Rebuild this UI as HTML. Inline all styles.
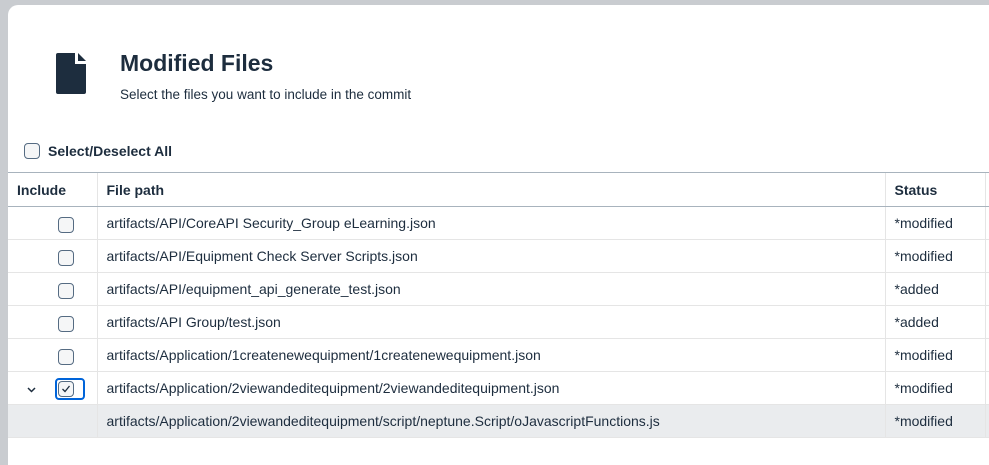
<!DOCTYPE html>
<html><head><style>
body{margin:0;width:989px;height:442px;overflow:hidden;background:#c9ccd0;font-family:"Liberation Sans",Arial,sans-serif;color:#1d2d3e;position:relative}
.dlg{position:absolute;left:8px;top:5px;width:1000px;height:460px;background:#fff;border-radius:10px 0 0 0}
.icon{position:absolute;left:47px;top:48px}
h1{position:absolute;left:112px;top:45px;margin:0;font-size:23px;font-weight:bold;color:#1d2d3e}
.sub{position:absolute;left:112px;top:82px;font-size:13.5px;color:#1d2d3e}
.cb{position:absolute;width:14px;height:14px;border:1px solid #556b82;border-radius:4px;background:#f5f6f7;box-sizing:content-box}
.sel{position:absolute;left:40px;top:138px;font-size:14px;font-weight:bold}
table{position:absolute;left:0;top:167px;border-collapse:collapse;font-size:14px;table-layout:fixed;width:1020px}
td,th{height:32px;border-bottom:1px solid #e5e5e5;padding:0 9px;text-align:left;white-space:nowrap}
th{height:33px;font-size:14px;font-weight:bold;border-top:1px solid #a8b3bd;border-bottom:1px solid #a8b3bd}
td+td,th+th{border-left:1px solid #e5e5e5}
tr.hl td{background:#eaecee}
</style></head><body>
<div class="dlg">
<svg class="icon" width="32" height="42" viewBox="0 0 32 42"><path d="M3 0H20V11H31V39Q31 41 29 41H3Q1 41 1 39V2Q1 0 3 0Z" fill="#1d2d3e"/><path d="M23 0L31 8H23Z" fill="#1d2d3e"/></svg>
<h1>Modified Files</h1>
<div class="sub">Select the files you want to include in the commit</div>
<div class="cb" style="left:16px;top:138px"></div>
<div class="sel">Select/Deselect All</div>
<table>
<col style="width:89px"><col style="width:788px"><col style="width:100px"><col style="width:43px">
<tr><th>Include</th><th>File path</th><th>Status</th><th></th></tr>
<tr><td></td><td>artifacts/API/CoreAPI Security_Group eLearning.json</td><td>*modified</td><td></td></tr>
<tr><td></td><td>artifacts/API/Equipment Check Server Scripts.json</td><td>*modified</td><td></td></tr>
<tr><td></td><td>artifacts/API/equipment_api_generate_test.json</td><td>*added</td><td></td></tr>
<tr><td></td><td>artifacts/API Group/test.json</td><td>*added</td><td></td></tr>
<tr><td></td><td>artifacts/Application/1createnewequipment/1createnewequipment.json</td><td>*modified</td><td></td></tr>
<tr><td></td><td>artifacts/Application/2viewandeditequipment/2viewandeditequipment.json</td><td>*modified</td><td></td></tr>
<tr class="hl"><td></td><td>artifacts/Application/2viewandeditequipment/script/neptune.Script/oJavascriptFunctions.js</td><td>*modified</td><td></td></tr>
</table>
<div class="cb" style="left:50px;top:212px"></div>
<div class="cb" style="left:50px;top:245px"></div>
<div class="cb" style="left:50px;top:278px"></div>
<div class="cb" style="left:50px;top:311px"></div>
<div class="cb" style="left:50px;top:344px"></div>
<div style="position:absolute;left:47px;top:373px;width:30px;height:22px;border:2px solid #0064d9;border-radius:4px;box-sizing:border-box"></div>
<div class="cb" style="left:50px;top:376px"></div>
<svg style="position:absolute;left:53px;top:379px" width="10" height="10" viewBox="0 0 10 10"><path d="M1.5 5L4 7.5L8.5 2" fill="none" stroke="#1d2d3e" stroke-width="1.3"/></svg>
<svg style="position:absolute;left:19px;top:382px" width="9" height="6" viewBox="0 0 9 6"><path d="M1 1L4.5 4.5L8 1" fill="none" stroke="#1d2d3e" stroke-width="1.5"/></svg>
</div>
</body></html>
